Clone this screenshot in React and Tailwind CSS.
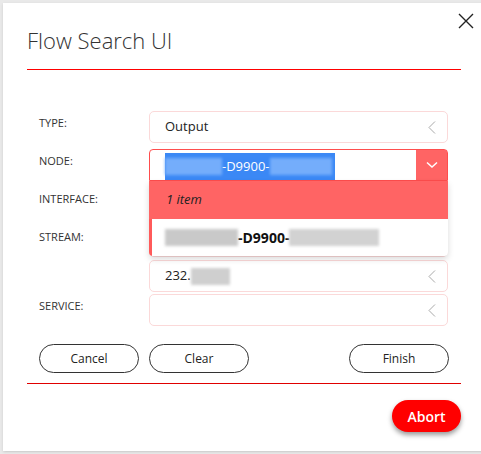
import React from 'react';

const font = { fontFamily: '"Open Sans", "Noto Sans", sans-serif' };

const ChevronLeft = () => (
  <svg width="8" height="13" viewBox="0 0 8 13" className="absolute right-[11px] top-[9px]">
    <polyline points="7,0.5 1,6.5 7,12.5" fill="none" stroke="#a9a9a9" strokeWidth="1" />
  </svg>
);

const Blur = ({ w, color }) => (
  <span
    className="inline-block h-[17px] align-middle blur-[1.5px]"
    style={{ width: w, background: color }}
  />
);

const Field = ({ children }) => (
  <div className="relative w-[299px] h-[32px] rounded-[5px] border border-[#fbd9d9] bg-white flex items-center pl-[15px] text-[13px] text-[#222]">
    {children}
    <ChevronLeft />
  </div>
);

const Label = ({ children }) => (
  <div className="w-[110px] pt-[4px] text-[11px] text-[#333]">{children}</div>
);

export default function App() {
  return (
    <div className="w-[481px] h-[454px] bg-[#e9e9e9] overflow-hidden" style={font}>
      <div className="relative ml-[3px] mt-[3px] w-[490px] h-[448px] bg-white shadow">
        {/* Close */}
        <button className="absolute left-[453px] top-[8px] w-[19px] h-[19px] flex items-center justify-center">
          <svg width="16" height="16" viewBox="0 0 16 16">
            <path d="M1 1 L15 15 M15 1 L1 15" stroke="#222" strokeWidth="1.4" />
          </svg>
        </button>

        {/* Header */}
        <div className="px-[24px]">
          <h1 className="pt-[22px] text-[22px] font-light text-[#333] leading-[30px]">Flow Search UI</h1>
          <div className="mt-[14px] w-[434px] border-t border-[#ff0000]" />
        </div>

        {/* Form */}
        <div className="relative pl-[36px] pt-[41px]">
          <div className="flex">
            <Label>TYPE:</Label>
            <Field>Output</Field>
          </div>

          <div className="flex mt-[6px]">
            <Label>NODE:</Label>
            <div className="relative w-[299px] h-[32px] rounded-t-[4px] border border-[#ff4d4d] bg-white flex">
              <div className="flex-1 flex items-stretch pl-[15px] pt-[3px]">
                <div className="flex items-center bg-[#3b88f5] pr-[3px] text-[13px] text-white">
                  <Blur w={57} color="#74adfb" />
                  <span>-D9900-</span>
                  <Blur w={62} color="#74adfb" />
                </div>
              </div>
              <div className="w-[31px] bg-[#ff6464] flex items-center justify-center">
                <svg width="12" height="8" viewBox="0 0 12 8">
                  <polyline points="1,1.5 6,6 11,1.5" fill="none" stroke="#fff" strokeWidth="1.5" />
                </svg>
              </div>

              {/* Dropdown list */}
              <div className="absolute left-[-1px] top-[31px] w-[299px] z-10 shadow-[0_3px_6px_rgba(0,0,0,0.15)] rounded-b-[4px] overflow-hidden bg-white">
                <div className="h-[38px] bg-[#ff6464] flex items-center pl-[17px] text-[13px] italic text-[#222]">
                  1 item
                </div>
                <div className="h-[37px] flex items-center border-l-[3px] border-[#ff5a5a] pl-[13px] text-[14px] font-bold text-[#111]">
                  <Blur w={73} color="#c9c9c9" />
                  <span>-D9900-</span>
                  <Blur w={90} color="#d2d2d2" />
                </div>
              </div>
            </div>
          </div>

          <div className="flex mt-[6px]">
            <Label>INTERFACE:</Label>
            <Field />
          </div>

          <div className="flex mt-[6px]">
            <Label>STREAM:</Label>
            <Field />
          </div>

          <div className="flex mt-[3px]">
            <Label />
            <Field>
              <span>232.</span>
              <Blur w={39} color="#cfcfcf" />
            </Field>
          </div>

          <div className="flex mt-[2px]">
            <Label>SERVICE:</Label>
            <Field />
          </div>
        </div>

        {/* Buttons */}
        <div className="flex pl-[36px] mt-[18px] text-[12px] text-[#222]">
          <button className="w-[100px] h-[29px] rounded-full border border-[#333]">Cancel</button>
          <button className="ml-[10px] w-[100px] h-[29px] rounded-full border border-[#333]">Clear</button>
          <button className="ml-[100px] w-[100px] h-[29px] rounded-full border border-[#333]">Finish</button>
        </div>

        <div className="px-[24px] mt-[10px]">
          <div className="w-[434px] border-t border-[#e00000]" />
        </div>

        <div className="flex justify-end w-[458px] mt-[16px]">
          <button className="w-[69px] h-[32px] rounded-full bg-[#ff0000] text-white text-[14px] font-semibold shadow-[0_3px_5px_rgba(0,0,0,0.4)]">
            Abort
          </button>
        </div>
      </div>
    </div>
  );
}
